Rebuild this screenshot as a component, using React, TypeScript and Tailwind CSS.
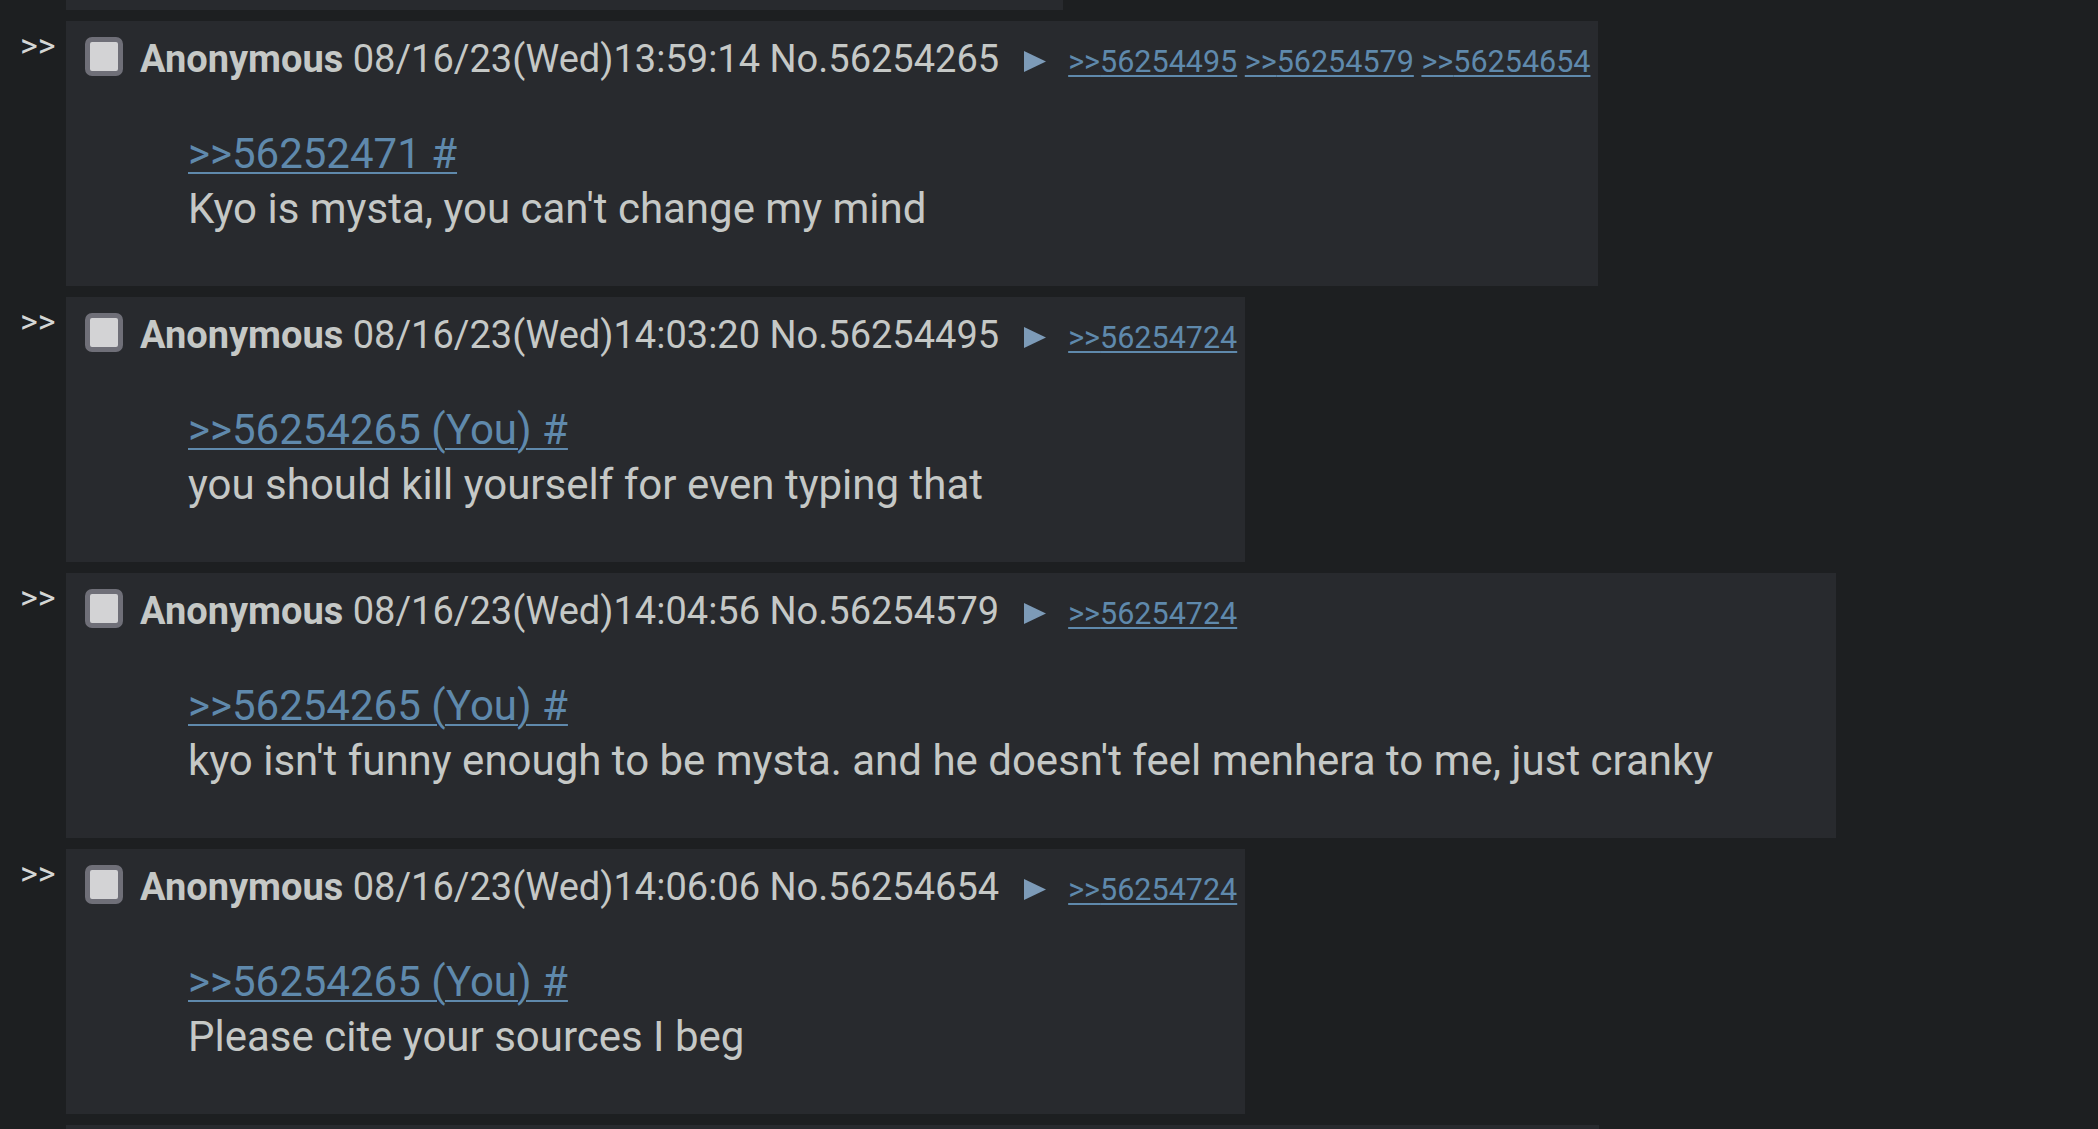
import React from 'react'

interface Post {
  no: string
  time: string
  backlinks: string[]
  quote: string
  body: string
}

const posts: Post[] = [
  {
    no: '56254265',
    time: '08/16/23(Wed)13:59:14',
    backlinks: ['56254495', '56254579', '56254654'],
    quote: '>>56252471 #',
    body: "Kyo is mysta, you can't change my mind",
  },
  {
    no: '56254495',
    time: '08/16/23(Wed)14:03:20',
    backlinks: ['56254724'],
    quote: '>>56254265 (You) #',
    body: 'you should kill yourself for even typing that',
  },
  {
    no: '56254579',
    time: '08/16/23(Wed)14:04:56',
    backlinks: ['56254724'],
    quote: '>>56254265 (You) #',
    body: "kyo isn't funny enough to be mysta. and he doesn't feel menhera to me, just cranky",
  },
  {
    no: '56254654',
    time: '08/16/23(Wed)14:06:06',
    backlinks: ['56254724'],
    quote: '>>56254265 (You) #',
    body: 'Please cite your sources I beg',
  },
]

function Reply({ post }: { post: Post }) {
  return (
    <div className="flex items-start mt-[11px]">
      {/* side arrows */}
      <div className="w-[66px] shrink-0 pl-[20px] pt-[4px] text-[34px] leading-[40px] text-[#d4d6d5]">
        &gt;&gt;
      </div>

      <div className="bg-[#282a2e] h-[265px] pl-[19px] pr-[8px]">
        <div className="flex items-start">
          <div className="mt-[16px] w-[38px] h-[39px] shrink-0 rounded-[7px] border-[5px] border-[#6f6f78] bg-[#d3d3d5]" />
          <div className="ml-[17px] mt-[16px] whitespace-nowrap text-[38px] leading-[44px] text-[#c5c8c6]">
            <span className="font-bold">Anonymous</span> {post.time} No.{post.no}
            <svg
              className="inline-block ml-[25px]"
              width="22"
              height="21"
              viewBox="0 0 22 21"
            >
              <path d="M0 0 L22 10.5 L0 21 Z" fill="#7d9bb8" />
            </svg>
            <span className="ml-[22px] text-[30.5px]">
              {post.backlinks.map((b, i) => (
                <React.Fragment key={b}>
                  {i > 0 && ' '}
                  <a className="text-[#5f89ac] underline underline-offset-[3px] decoration-[1.5px]">
                    &gt;&gt;{b}
                  </a>
                </React.Fragment>
              ))}
            </span>
          </div>
        </div>

        <div className="mt-[42px] ml-[103px] mr-[115px] text-[42px] leading-[55px] text-[#c5c8c6]">
          <a className="text-[#5f89ac] underline underline-offset-[4px] decoration-2">{post.quote}</a>
          <br />
          {post.body}
        </div>
      </div>
    </div>
  )
}

export default function App() {
  return (
    <div
      className="bg-[#1d1f21] overflow-hidden h-[1129px]"
      style={{ fontFamily: 'Roboto, "Noto Sans", sans-serif' }}
    >
      <div className="ml-[66px] w-[997px] h-[10px] bg-[#282a2e]" />
      {posts.map(p => (
        <Reply key={p.no} post={p} />
      ))}
      <div className="flex mt-[11px]">
        <div className="ml-[66px] w-[1533px] h-[20px] bg-[#282a2e]" />
      </div>
    </div>
  )
}
